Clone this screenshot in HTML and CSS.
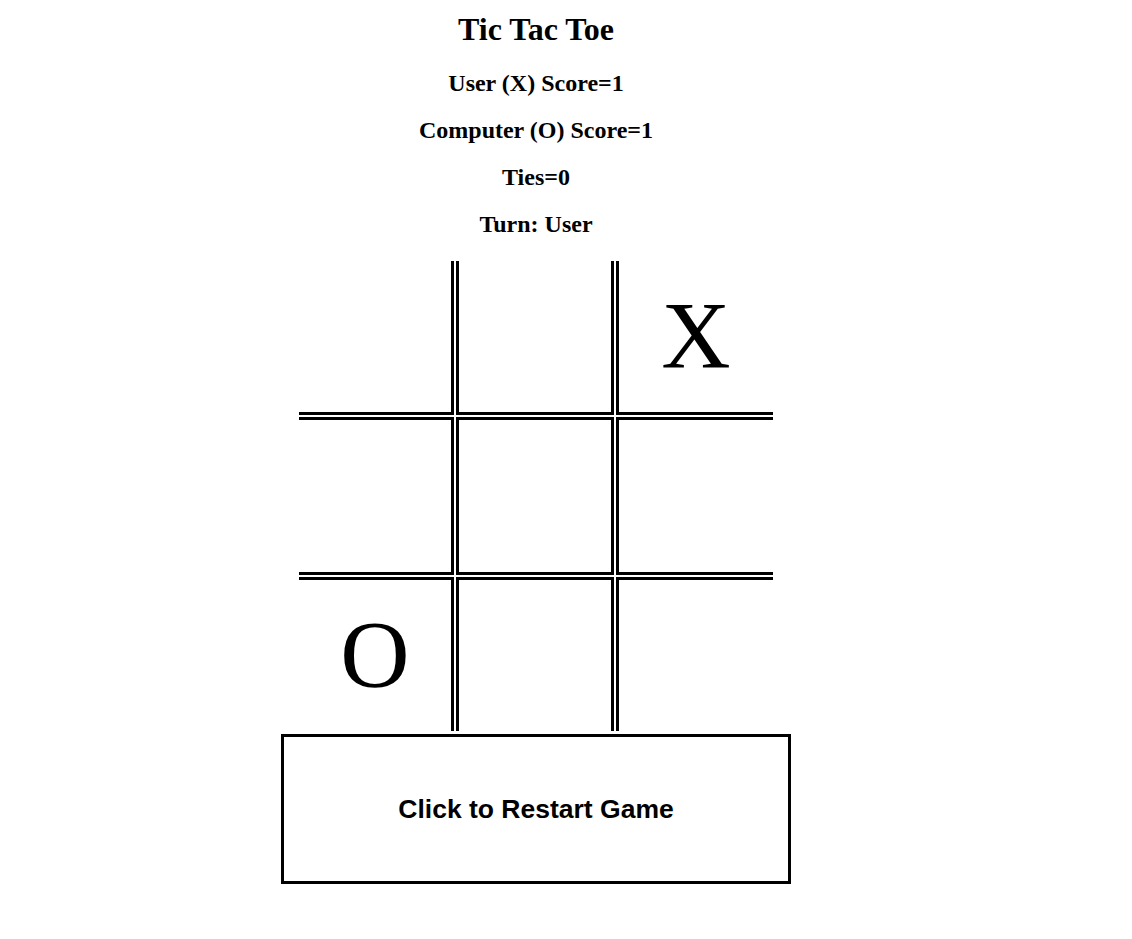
FILE: index.html
```html
<!DOCTYPE html>
<html lang="en">
<head>
<meta charset="utf-8">
<title>Tic Tac Toe</title>
<link rel="stylesheet" href="styles.css">
</head>
<body>
<div class="page">
  <h1 class="title">Tic Tac Toe</h1>
  <h2 class="stat">User (X) Score=1</h2>
  <h2 class="stat">Computer (O) Score=1</h2>
  <h2 class="stat">Ties=0</h2>
  <h2 class="stat">Turn: User</h2>
  <div class="board">
    <div class="cell b-r b-b"></div>
    <div class="cell b-l b-r b-b"></div>
    <div class="cell b-l b-b">X</div>
    <div class="cell b-t b-r b-b"></div>
    <div class="cell b-l b-r b-t b-b"></div>
    <div class="cell b-l b-t b-b"></div>
    <div class="cell b-t b-r">O</div>
    <div class="cell b-l b-t b-r"></div>
    <div class="cell b-l b-t"></div>
  </div>
  <button class="restart" type="button">Click to Restart Game</button>
</div>
</body>
</html>
```

FILE: styles.css
```css
body {
  margin: 8px;
  background: #ffffff;
  color: #000000;
  font-family: "Liberation Serif", "Times New Roman", serif;
}

.page {
  width: 1056px;
  display: flex;
  flex-direction: column;
  align-items: center;
  text-align: center;
}

.title {
  font-size: 32px;
  line-height: 36px;
  font-weight: bold;
  margin: 3px 0 23px;
}

.stat {
  font-size: 24px;
  line-height: 27px;
  font-weight: bold;
  margin: 0 0 20px;
}

.board {
  display: grid;
  grid-template-columns: 155px 158px 157px;
  grid-template-rows: 154px 158px 154px;
  gap: 2px;
  margin-top: 3px;
}

.cell {
  box-sizing: border-box;
  display: flex;
  align-items: center;
  justify-content: center;
  padding-bottom: 2px;
  font-family: "Liberation Serif", "Times New Roman", serif;
  font-size: 96px;
  line-height: 1;
}

.b-l { border-left: 3px solid #000; }
.b-r { border-right: 3px solid #000; }
.b-t { border-top: 3px solid #000; }
.b-b { border-bottom: 3px solid #000; }

.restart {
  margin-top: 3px;
  width: 510px;
  height: 150px;
  box-sizing: border-box;
  border: 3px solid #000;
  background: #ffffff;
  color: #000000;
  font-family: "Liberation Sans", Arial, sans-serif;
  font-size: 26.5px;
  font-weight: bold;
  padding: 0;
  cursor: pointer;
}
```
